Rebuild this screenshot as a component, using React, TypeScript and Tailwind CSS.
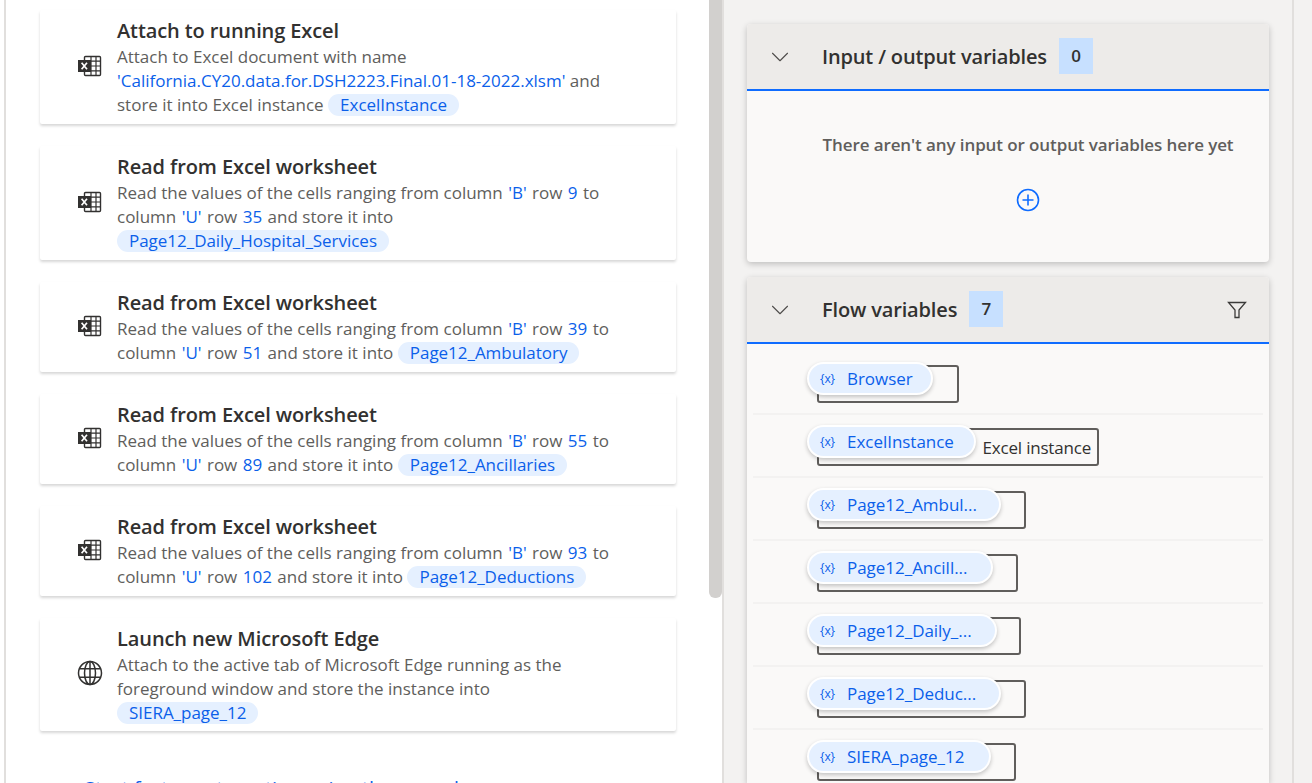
import { ChevronDown } from 'lucide-react'
import type { ReactNode } from 'react'

const font = '[font-family:"Open_Sans","Noto_Sans",sans-serif]'

// inline values get a hair of side margin, Open Sans runs narrower here than the original font
const V = ({ children }: { children: ReactNode }) => <span className="mx-[1px] text-[#0b5fea]">{children}</span>

const Pill = ({ children }: { children: ReactNode }) => (
  <span className="inline-block h-[22px] rounded-full bg-[#e5f0ff] px-3 align-baseline text-[17px] leading-[22px] tracking-[-0.03px] text-[#0b5fea]">
    {children}
  </span>
)

function ExcelIcon() {
  return (
    <svg width="26" height="24" viewBox="0 0 26 24" fill="none" className="mb-[2px] shrink-0">
      <rect x="7.5" y="2.5" width="16" height="19" rx="1" stroke="#323130" strokeWidth="1.4" />
      <path d="M14 2.5v19M14 7.2h9.5M14 12h9.5M14 16.8h9.5M19 2.5v19" stroke="#323130" strokeWidth="1.2" />
      <rect x="1" y="6" width="13" height="12" fill="#323130" />
      <path d="M4.6 8.8l5.4 6.4M10 8.8l-5.4 6.4" stroke="#fff" strokeWidth="1.7" />
    </svg>
  )
}

function GlobeIcon() {
  return (
    <svg width="26" height="26" viewBox="0 0 26 26" fill="none" stroke="#323130" strokeWidth="1.5" className="mb-[3px] shrink-0">
      <circle cx="13" cy="13" r="11.5" />
      <ellipse cx="13" cy="13" rx="5.5" ry="11.5" />
      <path d="M13 1.5v23M2.8 8.8h20.4M2.8 17.2h20.4" />
    </svg>
  )
}

function Card({ h, icon, title, children }: { h: string; icon: ReactNode; title: string; children: ReactNode }) {
  return (
    <div className={`flex ${h} shrink-0 items-center rounded-[2px] bg-white shadow-[0_2px_3px_rgba(0,0,0,0.16)]`}>
      <div className="flex w-[77px] shrink-0 justify-center pl-[24px] pr-[2px]">{icon}</div>
      <div className="w-[540px] min-w-0 text-[17px] leading-[24px] tracking-normal text-[#605e5c]">
        <div className="text-[20px] font-semibold leading-[28px] tracking-[-0.1px] text-[#323130]">{title}</div>
        {children}
      </div>
    </div>
  )
}

function SectionHeader({ title, count, filter }: { title: string; count: number; filter?: boolean }) {
  return (
    <div className="flex h-[67px] items-center border-b-2 border-[#0f6cff] bg-[#edebe9] pl-[18px] pr-[22px]">
      <ChevronDown size={30} strokeWidth={0.9} className="text-[#4f4d4b]" />
      <span className="ml-[27px] text-[20px] font-semibold tracking-[-0.15px] text-[#323130]">{title}</span>
      <span className="mb-[1px] ml-[12px] flex h-[36px] w-[34px] items-center justify-center bg-[#c7e0ff] text-[17px] font-semibold text-[#323130]">
        {count}
      </span>
      {filter && (
        <svg width="20" height="20" viewBox="0 0 20 20" fill="none" className="ml-auto">
          <path d="M1.5 2.5h17L12 10v7.5H8V10L1.5 2.5z" stroke="#3b3a39" strokeWidth="1.3" />
        </svg>
      )}
    </div>
  )
}

const flowVars = [
  { name: 'Browser', chip: 'w-[126px]', box: 'w-[142px]' },
  { name: 'ExcelInstance', chip: 'w-[169px]', box: 'w-[282px]', type: 'Excel instance' },
  { name: 'Page12_Ambul...', chip: 'w-[194px]', box: 'w-[209px]' },
  { name: 'Page12_Ancill...', chip: 'w-[186px]', box: 'w-[201px]' },
  { name: 'Page12_Daily_...', chip: 'w-[190px]', box: 'w-[204px]' },
  { name: 'Page12_Deduc...', chip: 'w-[194px]', box: 'w-[209px]' },
  { name: 'SIERA_page_12', chip: 'w-[184px]', box: 'w-[199px]' },
]

function VarRow({ name, chip, box, type }: { name: string; chip: string; box: string; type?: string }) {
  return (
    <div className="flex h-[63px] items-start border-b-2 border-[#f3f2f1] pl-[54px] pt-[13px] last:border-0">
      <div className="relative h-[38px]">
        <div
          className={`ml-[10px] flex h-[38px] ${box} items-end justify-end rounded-[3px] border-2 border-[#605e5c] pb-[5px] pr-[6px] text-[17px] leading-[22px] tracking-[-0.2px] text-[#323130]`}
        >
          {type}
        </div>
        <div
          className={`absolute -top-[3px] left-0 flex h-[33px] ${chip} items-center rounded-full border-2 border-white bg-[#e5f0ff] pl-[11px] text-[#0b5fea] shadow-[0_2px_4px_rgba(0,0,0,0.22)]`}
        >
          <span className="w-[27px] text-[12px]">{'{x}'}</span>
          <span className="text-[17px] tracking-[-0.03px]">{name}</span>
        </div>
      </div>
    </div>
  )
}

export default function App() {
  return (
    <div className={`flex h-[783px] w-[1312px] overflow-hidden bg-[#f3f2f1] ${font} tracking-[-0.1px]`}>
      <div className="w-[4px] shrink-0 bg-white" />
      {/* left: flow actions */}
      <div className="relative flex h-full w-[720px] shrink-0 border-x-2 border-[#e1dfdd] bg-white">
        <div className="flex w-[670px] shrink-0 flex-col gap-[22px] pl-[34px] pt-[10px]">
          <Card h="h-[114px]" icon={<ExcelIcon />} title="Attach to running Excel">
            <div>Attach to Excel document with name</div>
            <div>
              <span className="text-[#0b5fea]">'California.CY20.data.for.DSH2223.Final.01-18-2022.xlsm'</span> and
            </div>
            <div>
              store it into Excel instance <Pill>ExcelInstance</Pill>
            </div>
          </Card>
          <Card h="h-[114px]" icon={<ExcelIcon />} title="Read from Excel worksheet">
            <div>
              Read the values of the cells ranging from column <V>'B'</V> row <V>9</V> to
            </div>
            <div>
              column <V>'U'</V> row <V>35</V> and store it into
            </div>
            <div>
              <Pill>Page12_Daily_Hospital_Services</Pill>
            </div>
          </Card>
          <Card h="h-[90px]" icon={<ExcelIcon />} title="Read from Excel worksheet">
            <div>
              Read the values of the cells ranging from column <V>'B'</V> row <V>39</V> to
            </div>
            <div>
              column <V>'U'</V> row <V>51</V> and store it into <Pill>Page12_Ambulatory</Pill>
            </div>
          </Card>
          <Card h="h-[90px]" icon={<ExcelIcon />} title="Read from Excel worksheet">
            <div>
              Read the values of the cells ranging from column <V>'B'</V> row <V>55</V> to
            </div>
            <div>
              column <V>'U'</V> row <V>89</V> and store it into <Pill>Page12_Ancillaries</Pill>
            </div>
          </Card>
          <Card h="h-[90px]" icon={<ExcelIcon />} title="Read from Excel worksheet">
            <div>
              Read the values of the cells ranging from column <V>'B'</V> row <V>93</V> to
            </div>
            <div>
              column <V>'U'</V> row <V>102</V> and store it into <Pill>Page12_Deductions</Pill>
            </div>
          </Card>
          <Card h="h-[113px]" icon={<GlobeIcon />} title="Launch new Microsoft Edge">
            <div>Attach to the active tab of Microsoft Edge running as the</div>
            <div>foreground window and store the instance into</div>
            <div>
              <Pill>SIERA_page_12</Pill>
            </div>
          </Card>
          <div className="ml-[44px] mt-[24px] shrink-0 whitespace-nowrap text-[20px] leading-[24px] tracking-normal text-[#0b5fea]">
            Start faster automation using the recorder
          </div>
        </div>
        <div className="ml-[33px] h-[598px] w-[13px] shrink-0 rounded-b-[6px] bg-[#d2d0ce]" />
      </div>
      {/* right: variables */}
      <div className="flex h-full w-[570px] shrink-0 flex-col gap-[15px] border-r-2 border-[#e1dfdd] pl-[23px] pr-[23px] pt-[24px]">
        <div className="shrink-0 overflow-hidden rounded-[4px] bg-[#faf9f8] shadow-[0_2px_6px_rgba(0,0,0,0.22)]">
          <SectionHeader title="Input / output variables" count={0} />
          <div className="flex h-[171px] flex-col items-center pl-[40px] pt-[42px]">
            <div className="text-[17px] font-semibold leading-[24px] text-[#605e5c]">
              There aren't any input or output variables here yet
            </div>
            <svg width="24" height="24" viewBox="0 0 24 24" fill="none" className="mt-[31px]">
              <circle cx="12" cy="12" r="10.5" stroke="#0f6cff" strokeWidth="1.6" />
              <path d="M12 6.5v11M6.5 12h11" stroke="#0f6cff" strokeWidth="1.6" />
            </svg>
          </div>
        </div>
        <div className="flex-1 overflow-hidden rounded-t-[4px] bg-[#faf9f8] shadow-[0_2px_6px_rgba(0,0,0,0.22)]">
          <SectionHeader title="Flow variables" count={7} filter />
          <div className="mx-[6px] mt-[8px]">
            {flowVars.map((v) => (
              <VarRow key={v.name} {...v} />
            ))}
          </div>
        </div>
      </div>
    </div>
  )
}
